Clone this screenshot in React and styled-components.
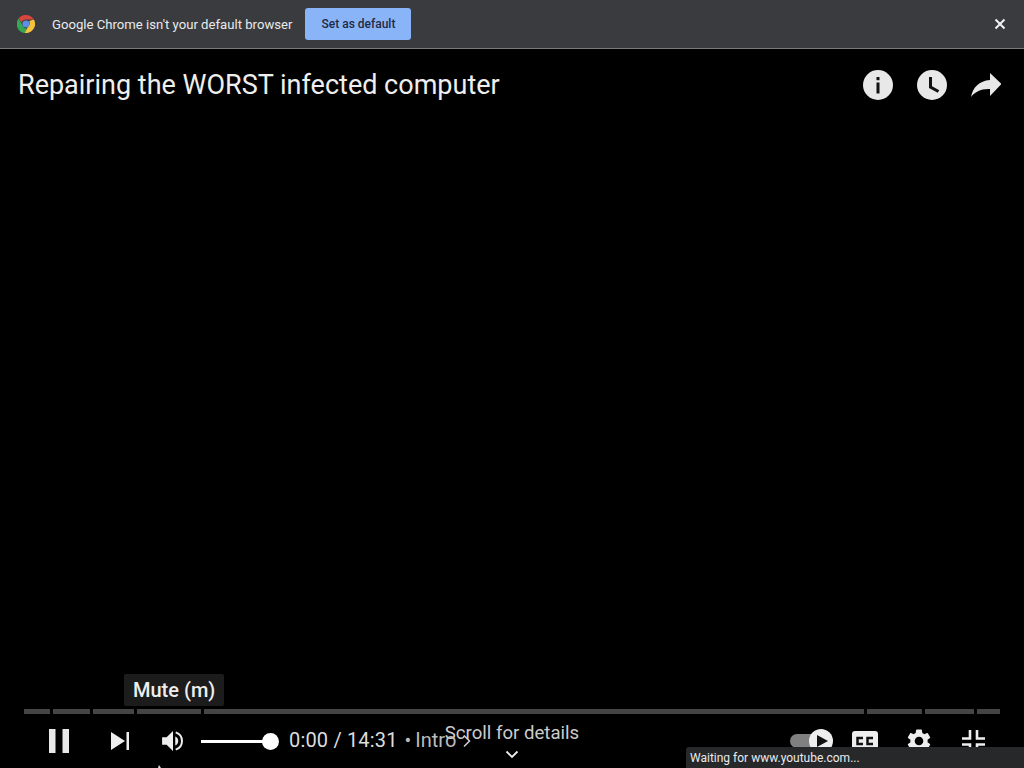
import React from "react";
import styled, { createGlobalStyle } from "styled-components";

const GlobalStyle = createGlobalStyle`
  html, body { margin: 0; padding: 0; background: #000; }
  body { font-family: Roboto, "Liberation Sans", sans-serif; }
`;

const Page = styled.div`
  position: relative;
  width: 1024px;
  height: 768px;
  display: flex;
  flex-direction: column;
  overflow: hidden;
  background: #000;
`;

const InfoBar = styled.div`
  height: 48px;
  flex: none;
  display: flex;
  align-items: center;
  padding: 0 16px 0 17px;
  background: #3a3b3e;
  border-bottom: 1px solid #7a7a7c;
`;

const InfoText = styled.span`
  margin-left: 17px;
  font-size: 13.15px;
  color: #e8eaed;
  white-space: nowrap;
`;

const DefaultButton = styled.button`
  margin-left: 13px;
  width: 106px;
  height: 32px;
  padding: 0;
  border: none;
  border-radius: 3px;
  background: #8ab4f8;
  color: #1f2a44;
  font: 500 12px Roboto, sans-serif;
`;

const CloseButton = styled.button`
  margin-left: auto;
  width: 16px;
  height: 16px;
  padding: 0;
  display: flex;
  border: none;
  background: none;
`;

const Player = styled.div`
  flex: 1;
  display: flex;
  flex-direction: column;
`;

const TopRow = styled.div`
  display: flex;
  align-items: center;
  height: 72px;
  padding: 0 23px 0 18px;
`;

const Title = styled.h1`
  margin: 0;
  flex: 1;
  font-size: 27px;
  font-weight: 400;
  color: #eee;
  white-space: nowrap;
`;

const TopActions = styled.div`
  display: flex;
  align-items: center;
  gap: 24px;
`;

const Spacer = styled.div`
  flex: 1;
`;

const Progress = styled.div`
  display: flex;
  gap: 3px;
  margin: 0 24px;
  height: 5px;
  flex: none;
`;

const Segment = styled.div`
  flex: ${(p) => p.$w} 0 0;
  background: #454545;
`;

const Controls = styled.div`
  height: 54px;
  flex: none;
  display: flex;
  align-items: center;
  padding-left: 49px;
`;

const NextIcon = styled.svg`
  margin-left: 42px;
`;

const VolumeIcon = styled.svg`
  margin-left: 33px;
`;

const Slider = styled.div`
  position: relative;
  width: 70px;
  height: 3px;
  margin-left: 17px;
  background: #fff;
`;

const Knob = styled.div`
  position: absolute;
  right: -8px;
  top: -7px;
  width: 17px;
  height: 17px;
  border-radius: 50%;
  background: #fff;
`;

const Time = styled.span`
  margin-left: 18px;
  margin-top: -2px;
  font-size: 20px;
  letter-spacing: 0.17px;
  color: #ddd;
  white-space: nowrap;
`;

const Chapter = styled.span`
  margin-left: 7px;
  margin-top: -2px;
  font-size: 20px;
  word-spacing: -1px;
  color: #bbb;
  white-space: nowrap;
`;

const ChapterArrow = styled.svg`
  margin-left: 6px;
`;

const RightControls = styled.div`
  margin-left: auto;
  display: flex;
  align-items: center;
  padding-right: 24px;
`;

const ControlButton = styled.div`
  width: 54px;
  height: 24px;
  display: flex;
  align-items: center;
  justify-content: center;
`;

const Tooltip = styled.div`
  position: absolute;
  left: 124px;
  top: 674px;
  height: 32px;
  padding: 0 9px;
  display: flex;
  align-items: center;
  border-radius: 2px;
  background: #1c1c1c;
  color: #eee;
  font-size: 20px;
  font-weight: 500;
`;

const ScrollHint = styled.div`
  position: absolute;
  left: 0;
  right: 0;
  top: 722px;
  display: flex;
  flex-direction: column;
  align-items: center;
  gap: 5px;
  color: #ccc;
  font-size: 18.6px;
  line-height: 23px;
`;

const StatusBubble = styled.div`
  position: absolute;
  left: 686px;
  right: 0;
  bottom: 0;
  height: 21px;
  padding-left: 4px;
  display: flex;
  align-items: center;
  border-top-left-radius: 3px;
  background: #27282a;
  color: #e8eaed;
  font: 12px Roboto, sans-serif;
`;

const CursorTip = styled.svg`
  position: absolute;
  left: 158px;
  bottom: 0;
`;

const segments = [26, 37, 41, 64, 660, 55, 49, 23];

function ChromeLogo() {
  return (
    <svg width="18" height="18" viewBox="1 1 18 18">
      <path d="M10 1a9 9 0 0 1 7.8 4.5H10a4.5 4.5 0 0 0-4.3 3.2L2.6 4.4A9 9 0 0 1 10 1z" fill="#d9453a" />
      <path d="M2.6 4.4l3.9 6.8A4.5 4.5 0 0 0 11 14.4L8.6 18.9A9 9 0 0 1 2.6 4.4z" fill="#36a853" />
      <path d="M17.8 5.5A9 9 0 0 1 8.6 18.9l3.9-6.8A4.5 4.5 0 0 0 13.2 7z" fill="#f6c33b" />
      <circle cx="10" cy="10" r="3.6" fill="#5c8fe6" />
    </svg>
  );
}

function App() {
  return (
    <Page>
      <GlobalStyle />
      <InfoBar>
        <ChromeLogo />
        <InfoText>Google Chrome isn't your default browser</InfoText>
        <DefaultButton>Set as default</DefaultButton>
        <CloseButton aria-label="Close">
          <svg width="16" height="16" viewBox="0 0 16 16">
            <path d="M3.5 3.5l9 9M12.5 3.5l-9 9" stroke="#f1f3f4" strokeWidth="2" />
          </svg>
        </CloseButton>
      </InfoBar>
      <Player>
        <TopRow>
          <Title>Repairing the WORST infected computer</Title>
          <TopActions>
            <svg width="30" height="30" viewBox="0 0 30 30">
              <circle cx="15" cy="15" r="15" fill="#e8e8e8" />
              <rect x="13.5" y="12.5" width="3" height="11" fill="#111" />
              <rect x="13.5" y="7" width="3" height="3.2" fill="#111" />
            </svg>
            <svg width="30" height="30" viewBox="0 0 30 30">
              <circle cx="15" cy="15" r="15" fill="#e8e8e8" />
              <path d="M13.5 7v10l8 4.500" fill="none" stroke="#111" strokeWidth="3" />
            </svg>
            <svg width="30" height="30" viewBox="0 0 30 30">
              <path d="M19 3l11.500 11L19 26v-7C10 18.500 4 22 0 27 2 17 8 11 19 10z" fill="#e8e8e8" />
            </svg>
          </TopActions>
        </TopRow>
        <Spacer />
        <Progress>
          {segments.map((w, i) => (
            <Segment key={i} $w={w} />
          ))}
        </Progress>
        <Controls>
          <svg width="20" height="24" viewBox="0 0 20 24">
            <path d="M0 0h6.500v24H0zM13.500 0H20v24h-6.500z" fill="#e8e8e8" />
          </svg>
          <NextIcon width="18" height="18" viewBox="0 0 18 18">
            <path d="M0 0l14 9L0 18zM15.500 0H18v18h-2.500z" fill="#eee" />
          </NextIcon>
          <VolumeIcon width="22" height="20" viewBox="0 0 24 22">
            <path d="M0 7h5l7-7v22l-7-7H0z" fill="#eee" />
            <path d="M14.500 6a5.500 5.500 0 0 1 0 10z" fill="#eee" />
            <path d="M15 1.500a10 10 0 0 1 0 19" fill="none" stroke="#eee" strokeWidth="2.200" />
          </VolumeIcon>
          <Slider>
            <Knob />
          </Slider>
          <Time>0:00 / 14:31</Time>
          <Chapter>• Intro</Chapter>
          <ChapterArrow width="10" height="14" viewBox="0 0 10 14">
            <path d="M2 1.500L7.500 7 2 12.500" fill="none" stroke="#ccc" strokeWidth="1.600" />
          </ChapterArrow>
          <RightControls>
            <ControlButton>
              <svg width="43" height="24" viewBox="0 0 43 24">
                <rect x="0" y="5" width="32" height="14" rx="7" fill="#808080" />
                <circle cx="31" cy="12" r="12" fill="#eee" />
                <path d="M27 6l11 6-11 6z" fill="#111" />
              </svg>
            </ControlButton>
            <ControlButton>
              <svg width="26" height="24" viewBox="0 0 26 24">
                <rect x="0" y="2" width="26" height="20" rx="3" fill="#eee" />
                <path d="M11 9H5.500v6H11M21 9h-5.500v6H21" fill="none" stroke="#111" strokeWidth="2.500" />
              </svg>
            </ControlButton>
            <ControlButton>
              <svg width="24" height="24" viewBox="2 2 20 20">
                <path
                  d="M19.14 12.94c.04-.3.06-.61.06-.94 0-.32-.02-.64-.07-.94l2.03-1.58a.49.49 0 0 0 .12-.61l-1.920-3.320a.488.488 0 0 0-.59-.22l-2.390.96c-.5-.38-1.030-.7-1.620-.94l-.36-2.540a.484.484 0 0 0-.48-.41h-3.840c-.24 0-.43.17-.47.41l-.36 2.540c-.59.24-1.130.57-1.620.94l-2.390-.96c-.22-.08-.47 0-.59.22L2.740 8.870c-.12.21-.08.47.12.61l2.030 1.580c-.05.3-.09.63-.09.94s.02.64.07.94l-2.030 1.580a.49.49 0 0 0-.12.61l1.920 3.320c.12.22.37.29.59.22l2.390-.96c.5.38 1.030.7 1.620.94l.36 2.540c.05.24.24.41.48.41h3.840c.24 0 .44-.17.47-.41l.36-2.540c.59-.24 1.130-.56 1.620-.94l2.390.96c.22.08.47 0 .59-.22l1.920-3.320c.12-.22.07-.47-.12-.61l-2.010-1.580zM12 15.600c-1.980 0-3.600-1.620-3.600-3.600s1.620-3.600 3.600-3.600 3.600 1.620 3.600 3.600-1.620 3.600-3.600 3.600z"
                  fill="#eee"
                />
              </svg>
            </ControlButton>
            <ControlButton>
              <svg width="23" height="23" viewBox="0 0 23 23">
                <path d="M8 0v8.500H0M15 0v8.500h8M0 14.500h8V23M23 14.500h-8V23" fill="none" stroke="#eee" strokeWidth="2.600" />
              </svg>
            </ControlButton>
          </RightControls>
        </Controls>
      </Player>
      <Tooltip>Mute (m)</Tooltip>
      <ScrollHint>
        Scroll for details
        <svg width="14" height="9" viewBox="0 0 14 9">
          <path d="M1.500 1.500L7 7l5.500-5.500" fill="none" stroke="#eee" strokeWidth="1.800" />
        </svg>
      </ScrollHint>
      <StatusBubble>Waiting for www.youtube.com...</StatusBubble>
      <CursorTip width="4" height="3" viewBox="0 0 4 3">
        <path d="M1 0l2 3H0z" fill="#ddd" />
      </CursorTip>
    </Page>
  );
}

export default App;
